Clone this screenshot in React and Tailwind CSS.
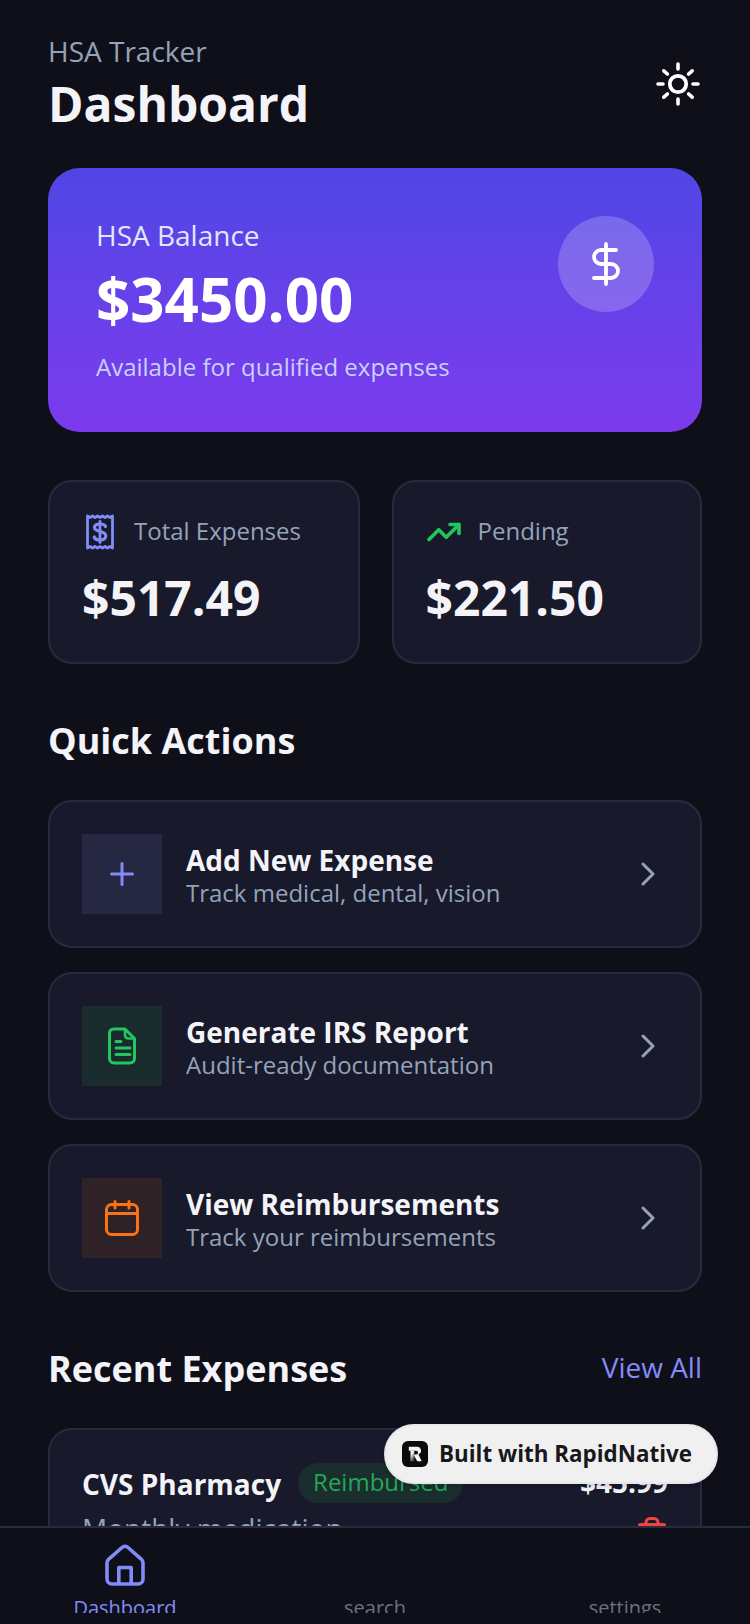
import React from 'react';
import { ChevronRight, DollarSign, Plus, TrendingUp } from 'lucide-react';

const FONT = "font-['Open_Sans','Noto_Sans',sans-serif]";

const SunIcon = () => (
    <svg width="44" height="44" viewBox="0 0 44 44" fill="none" stroke="#ffffff" strokeWidth="3.6" strokeLinecap="round" className="mr-[2px]">
        <circle cx="22" cy="22" r="8.2" strokeWidth="3.8" />
        <path d="M22 2 V7 M22 37 V42 M2 22 H7 M37 22 H42 M7.8 8.8 L11.4 12 M32.6 32 L36.2 35.2 M36.2 8.8 L32.6 12 M11.4 32 L7.8 35.2" />
    </svg>
);

const ReceiptIcon = () => (
    <div className="flex h-9 w-9 shrink-0 items-center justify-center">
        <svg width="28" height="36" viewBox="0 0 28 36" fill="none">
            <path d="M1.5 2 L4 3.5 L6.5 2 L9 3.5 L11.5 2 L14 3.5 L16.5 2 L19 3.5 L21.5 2 L24 3.5 L26.5 2 V34 L24 32.5 L21.5 34 L19 32.5 L16.5 34 L14 32.5 L11.5 34 L9 32.5 L6.5 34 L4 32.5 L1.5 34 Z" stroke="#818cf8" strokeWidth="2.8" strokeLinejoin="round" />
            <path d="M19.5 12.5 C19 10.8 17 10 14 10 C10.5 10 8.5 11.2 8.5 13.6 C8.5 19 19.8 16 19.8 21.8 C19.8 24.6 17.5 26 14 26 C10.8 26 8.7 25 8.2 23" stroke="#818cf8" strokeWidth="3.2" strokeLinecap="round" />
            <path d="M14 7.5 V28.5" stroke="#818cf8" strokeWidth="2.8" strokeLinecap="round" />
        </svg>
    </div>
);

const ReportIcon = () => (
    <svg width="28" height="38" viewBox="0 0 28 38" fill="none" stroke="#22c55e" strokeWidth="3">
        <path d="M5.5 2 H17 L26.5 11.5 V31.5 A4.5 4.5 0 0 1 22 36 H6 A4.5 4.5 0 0 1 1.5 31.5 V6 A4 4 0 0 1 5.5 2 Z" strokeLinejoin="round" />
        <path d="M17 2 V8 A3.5 3.5 0 0 0 20.5 11.5 H26.5" strokeWidth="2.6" strokeLinejoin="round" />
        <path d="M8 14.5 H13 M8 21 H22 M8 27.5 H22" strokeLinecap="round" />
    </svg>
);

const CalendarIcon = () => (
    <svg width="34" height="36" viewBox="0 0 34 36" fill="none" stroke="#f97316" strokeWidth="3">
        <rect x="1.5" y="4.5" width="31" height="30" rx="5" />
        <path d="M1.5 13.5 H32.5 M10 1.5 V8 M24 1.5 V8" strokeLinecap="round" />
    </svg>
);

const HomeIcon = () => (
    <svg width="40" height="42" viewBox="0 0 40 42" fill="none" stroke="#818cf8" strokeWidth="3.6" strokeLinejoin="round">
        <path d="M2 19 A5 5 0 0 1 3.8 15.2 L17 3.5 A4.5 4.5 0 0 1 23 3.5 L36.2 15.2 A5 5 0 0 1 38 19 V35 A5 5 0 0 1 33 40 H7 A5 5 0 0 1 2 35 Z" />
        <path d="M13.8 40 V23.5 H26.2 V40" />
    </svg>
);

const TrashIcon = () => (
    <svg width="28" height="34" viewBox="0 0 28 34" fill="none" stroke="#ef4444" strokeLinecap="round" className="mr-[2px] mt-[15px]">
        <path d="M2 8 H26" strokeWidth="4" />
        <path d="M8 8 V5.5 A4 4 0 0 1 12 1.5 H16 A4 4 0 0 1 20 5.5 V8" strokeWidth="3" />
        <path d="M5 11 L6.5 32 H21.5 L23 11" strokeWidth="3" />
    </svg>
);

const LogoIcon = () => (
    <div className="flex h-[26px] w-[26px] shrink-0 items-center justify-center rounded-[6px] bg-[#0a0a0a]">
        <svg width="16" height="18" viewBox="0 0 14 16">
            <defs>
                <linearGradient id="logo-fade" x1="0" y1="0" x2="0.5" y2="1">
                    <stop offset="0.35" stopColor="#f4f4f5" />
                    <stop offset="1" stopColor="#3f3f46" />
                </linearGradient>
            </defs>
            <path d="M1.5 1.5 H9 A3.5 3.5 0 0 1 10 8.3 L13 14.5 H9 L5.6 8.5 H8 A1 1 0 0 0 8 5 H1.5 Z" fill="#f4f4f5" />
            <path d="M3 5 H6.4 V14.5 H3 Z" fill="url(#logo-fade)" />
        </svg>
    </div>
);

const StatCard = ({ icon, label, value, width }) => (
    <div className={`h-[184px] rounded-[24px] border-2 border-[#2a2a3e] bg-[#18192b] p-8 ${width}`}>
        <div className="flex h-[36px] items-center gap-4">
            {icon}
            <span className="mb-[2px] text-[24px] leading-[32px] text-[#94a3b8]">{label}</span>
        </div>
        <div className="mt-[18px] text-[48px] font-bold leading-[60px] text-[#f4f4f8]">{value}</div>
    </div>
);

const ActionRow = ({ icon, tint, title, subtitle }) => (
    <div className="flex h-[148px] items-center rounded-[24px] border-2 border-[#2a2a3e] bg-[#18192b] px-8">
        <div className={`flex h-20 w-20 shrink-0 items-center justify-center ${tint}`}>{icon}</div>
        <div className="ml-6 flex-1 pt-[2px]">
            <div className="text-[28px] font-bold leading-[36px] text-[#f4f4f8]">{title}</div>
            <div className="text-[24px] leading-[30px] text-[#94a3b8]">{subtitle}</div>
        </div>
        <ChevronRight size={40} strokeWidth={1.8} className="text-[#94a3b8]" />
    </div>
);

const TabItem = ({ icon, label, active }) => (
    <div className="flex w-[250px] flex-col items-center">
        <div className="flex h-[42px] items-center justify-center">{icon}</div>
        <div className="mt-[7px] h-[20px] overflow-hidden">
            <span className={`block text-[20px] leading-[30px] ${active ? 'text-[#818cf8]' : 'text-[#6b7280]'}`}>{label}</span>
        </div>
    </div>
);

export default function App() {
    return (
        <div className={`relative flex h-[1624px] w-[750px] flex-col overflow-hidden bg-[#0f0f1a] ${FONT}`}>
            <main className="min-h-0 flex-1 overflow-hidden px-12 pt-[32px]">
                {/* ヘッダー */}
                <div className="flex h-[104px] items-center justify-between">
                    <div>
                        <div className="text-[28px] leading-[38px] text-[#94a3b8]">HSA Tracker</div>
                        <div className="mt-[2px] text-[48px] font-bold leading-[64px] text-[#f4f4f8]">Dashboard</div>
                    </div>
                    <SunIcon />
                </div>

                {/* 残高カード */}
                <div className="mt-[32px] flex h-[264px] items-start justify-between rounded-[32px] bg-gradient-to-b from-[#4f46e5] to-[#7c3aed] p-12">
                    <div className="pt-[1px]">
                        <div className="text-[28px] leading-[36px] text-[#e0e7ff]">HSA Balance</div>
                        <div className="mt-[7px] text-[60px] font-bold leading-[78px] text-white">$3450.00</div>
                        <div className="mt-[13px] text-[24px] leading-[32px] text-[#c7d2fe]">Available for qualified expenses</div>
                    </div>
                    <div className="flex h-24 w-24 items-center justify-center rounded-full bg-white/20">
                        <DollarSign size={48} strokeWidth={1.9} className="text-white" />
                    </div>
                </div>

                {/* 集計 */}
                <div className="mt-12 flex gap-8">
                    <StatCard width="w-[311.5px]" icon={<ReceiptIcon />} label="Total Expenses" value="$517.49" />
                    <StatCard width="flex-1" icon={<TrendingUp size={36} strokeWidth={2.4} className="text-[#22c55e]" />} label="Pending" value="$221.50" />
                </div>

                <h2 className="mt-[53px] text-[36px] font-bold leading-[48px] text-[#f4f4f8]">Quick Actions</h2>

                <div className="mt-[35px] flex flex-col gap-6">
                    <ActionRow icon={<Plus size={36} strokeWidth={2} className="text-[#818cf8]" />} tint="bg-[#252743]" title="Add New Expense" subtitle="Track medical, dental, vision" />
                    <ActionRow icon={<ReportIcon />} tint="bg-[#1a2b2e]" title="Generate IRS Report" subtitle="Audit-ready documentation" />
                    <ActionRow icon={<CalendarIcon />} tint="bg-[#2e2226]" title="View Reimbursements" subtitle="Track your reimbursements" />
                </div>

                <div className="mt-[53px] flex items-center justify-between">
                    <h2 className="text-[36px] font-bold leading-[48px] text-[#f4f4f8]">Recent Expenses</h2>
                    <span className="mb-[4px] text-[28px] leading-[40px] text-[#818cf8]">View All</span>
                </div>

                <div className="mt-[35px] rounded-[24px] border-2 border-[#2a2a3e] bg-[#18192b] p-8">
                    <div className="flex items-start justify-between">
                        <div>
                            <div className="flex items-center gap-[17px]">
                                <span className="mt-[2px] text-[28px] font-bold leading-[40px] text-[#f4f4f8]">CVS Pharmacy</span>
                                <span className="rounded-[20px] bg-[#1a2f2d] px-[15px] pb-[3px] pt-[1px] text-[24px] leading-[36px] text-[#22a855]">Reimbursed</span>
                            </div>
                            <div className="mt-[6px] text-[28px] leading-[36px] text-[#94a3b8]">Monthly medication</div>
                        </div>
                        <div className="flex flex-col items-end">
                            <span className="text-[28px] font-bold leading-[40px] text-[#f4f4f8]">$45.99</span>
                            <TrashIcon />
                        </div>
                    </div>
                </div>
            </main>

            {/* タブバー */}
            <nav className="flex h-[98px] shrink-0 items-start border-t-2 border-[#2a2a3e] bg-[#0f0f1a] pt-[16px]">
                <TabItem active icon={<HomeIcon />} label="Dashboard" />
                <TabItem label="search" />
                <TabItem label="settings" />
            </nav>

            {/* バッジ */}
            <div className="absolute left-[384px] top-[1424px] flex h-[60px] w-[334px] items-center gap-[11px] rounded-full border-2 border-[#e5e7eb] bg-[#f0f0f1] pl-[16px] shadow-md">
                <LogoIcon />
                <span className="text-[22.4px] font-bold leading-[32px] text-[#18181b]">Built with RapidNative</span>
            </div>
        </div>
    );
}
